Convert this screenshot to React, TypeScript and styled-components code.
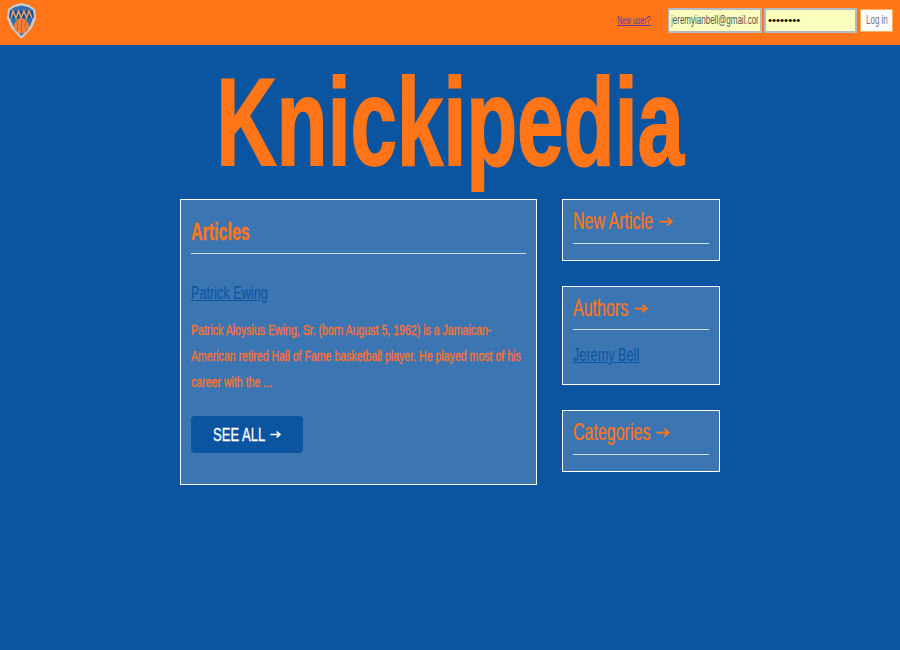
import React from "react";
import styled, { createGlobalStyle } from "styled-components";

const BLUE = "#0a54a0";
const ORANGE = "#ff7517";

const Global = createGlobalStyle`
  html, body { margin: 0; padding: 0; height: 100%; background: ${BLUE}; }
  body { font-family: "Liberation Sans", Arial, sans-serif; }
`;

const Header = styled.header`
  height: 45px;
  background: ${ORANGE};
  display: flex;
  align-items: center;
  padding: 0 7px 0 6px;
`;
const Logo = styled.svg`
  width: 31px;
  height: 37px;
  display: block;
  margin-top: -3px;
`;
const LoginForm = styled.form`
  margin-left: auto;
  margin-bottom: 5px;
  display: flex;
  align-items: center;
`;
const Narrow = styled.span<{ $scale?: number; $width?: number }>`
  display: inline-block;
  white-space: nowrap;
  ${(p) => (p.$width ? `width: ${p.$width}px;` : "")}
  transform-origin: left center;
  transform: scaleX(${(p) => p.$scale ?? 0.667});
`;
const Underlined = styled(Narrow)`
  text-decoration: underline;
`;
const NewUser = styled.a`
  width: 51px;
  font-size: 10.5px;
  color: #5a3aa8;
  margin-top: -1px;
`;
const FieldBox = styled.div`
  width: 93px;
  height: 25px;
  margin-right: 3px;
`;
const Field = styled.input`
  box-sizing: border-box;
  display: block;
  width: 140px;
  height: 25px;
  padding: 0 3px;
  border: 2px solid #b4b8c0;
  background: #faffbd;
  font-family: "Liberation Sans", Arial, sans-serif;
  font-size: 12px;
  color: #555;
  outline: none;
  transform-origin: left center;
  transform: scaleX(0.667);
`;
const PasswordField = styled.input`
  box-sizing: border-box;
  display: block;
  width: 93px;
  height: 25px;
  padding: 0 2px;
  border: 2px solid #b4b8c0;
  background: #faffbd;
  font-family: "Liberation Sans", Arial, sans-serif;
  font-size: 11.5px;
  color: #111;
  outline: none;
`;
const LoginButton = styled.button`
  box-sizing: border-box;
  width: 33px;
  height: 23px;
  padding: 0 0 0 5px;
  text-align: left;
  border: 1px solid #ffb060;
  background: #fff;
  color: #777;
  font-family: "Liberation Sans", Arial, sans-serif;
  font-size: 12px;
`;
const Title = styled.h1`
  margin: 0;
  height: 154px;
  color: ${ORANGE};
  font-size: 124px;
  line-height: 154px;
  font-weight: 700;
  letter-spacing: -0.3px;
  -webkit-text-stroke: 1.8px ${ORANGE};
  text-align: center;
  white-space: nowrap;
  transform: scaleX(0.675);
`;
const Columns = styled.main`
  width: 540px;
  margin: 0 auto;
  display: flex;
  align-items: flex-start;
  gap: 25px;
`;
const Sidebar = styled.aside`
  width: 158px;
  display: flex;
  flex-direction: column;
  gap: 25px;
`;
const Panel = styled.section<{ $height: number }>`
  box-sizing: border-box;
  height: ${(p) => p.$height}px;
  padding: 0 10px;
  border: 1px solid #fff;
  background: rgba(255, 255, 255, 0.2);
`;
const MainPanel = styled(Panel)`
  width: 357px;
  flex: none;
`;
const PanelHeading = styled.h2`
  margin: 0;
  padding-top: 17px;
  height: 36px;
  border-bottom: 1px solid rgba(255, 255, 255, 0.75);
  color: ${ORANGE};
  font-size: 24px;
  line-height: 29px;
  font-weight: 700;
  -webkit-text-stroke: 0.4px ${ORANGE};
`;
const SideHeading = styled.h3<{ $height?: number }>`
  margin: 0;
  padding-top: 6px;
  height: ${(p) => p.$height ?? 37}px;
  border-bottom: 1px solid rgba(255, 255, 255, 0.75);
  color: ${ORANGE};
  font-size: 24px;
  line-height: 29px;
  font-weight: 400;
  -webkit-text-stroke: 0.2px ${ORANGE};
`;
const ArticleLink = styled.a`
  display: block;
  margin-top: 28px;
  color: ${BLUE};
  font-size: 19px;
  line-height: 22px;
`;
const AuthorLink = styled(ArticleLink)`
  margin-top: 14px;
`;
const Summary = styled.p`
  width: 475px;
  margin: 13px 0 0;
  color: #fb7130;
  font-size: 15px;
  line-height: 26px;
  -webkit-text-stroke: 0.35px #fb7130;
  transform-origin: left top;
  transform: scaleX(0.705);
`;
const SeeAll = styled.a`
  display: flex;
  align-items: center;
  justify-content: center;
  width: 112px;
  height: 37px;
  margin-top: 21px;
  border-radius: 4px;
  background: ${BLUE};
  color: #fff;
  font-size: 19px;
  text-decoration: none;
  -webkit-text-stroke: 0.3px #fff;
`;
const ArrowIcon = styled.svg<{ $gap: number; $size: number }>`
  width: ${(p) => p.$size}px;
  height: ${(p) => p.$size * 0.8}px;
  margin-left: ${(p) => p.$gap}px;
  vertical-align: 2px;
`;

const Arrow = ({ gap, size }: { gap: number; size: number }) => (
  <ArrowIcon $gap={gap} $size={size} viewBox="0 0 15 12" aria-hidden="true">
    <path d="M0.5 6 H13 M9 2 L13.6 6 L9 10" stroke="currentColor" strokeWidth="2" fill="none" />
  </ArrowIcon>
);

const HeadingLabel = ({ text, width }: { text: string; width: number }) => (
  <>
    <Narrow $width={width}>{text}</Narrow>
    <Arrow gap={6} size={14} />
  </>
);

const App = () => (
  <>
    <Global />
    <Header>
      <Logo viewBox="0 0 31 37" aria-label="Knicks logo">
        <path d="M2 6 L8 2 L15.5 0 L23 2 L29 6 L30 15 L26 25 L15.5 36 L5 25 L1 15 Z" fill="#c8ccd2" />
        <path d="M4 7 L9 4 L15.5 2.5 L22 4 L27 7 L27.5 14 L24 23 L15.5 33 L7 23 L3.5 14 Z" fill="#2f6fb0" />
        <circle cx="15.5" cy="23" r="7.5" fill="#f0803a" />
        <path d="M15.5 15.5 V30.5 M10 18 Q14 23 10 28 M21 18 Q17 23 21 28" stroke="#a85a2a" strokeWidth="0.7" fill="none" />
        <path d="M4 8 L27 8 L28 15 L3 15 Z" fill="#1d4f8f" />
        <path d="M5 15 L7 8 L10 15 L12.5 8 L15 15 L18 8 L20.5 15 L23 8 L26 15" stroke="#f4a468" strokeWidth="1.4" fill="none" />
      </Logo>
      <LoginForm>
        <NewUser href="#">
          <Underlined>New user?</Underlined>
        </NewUser>
        <FieldBox>
          <Field defaultValue="jeremyianbell@gmail.com" />
        </FieldBox>
        <FieldBox>
          <PasswordField type="password" defaultValue="password" />
        </FieldBox>
        <LoginButton type="button">
          <Narrow>Log in</Narrow>
        </LoginButton>
      </LoginForm>
    </Header>
    <Title>Knickipedia</Title>
    <Columns>
      <MainPanel $height={286}>
        <PanelHeading>
          <Narrow>Articles</Narrow>
        </PanelHeading>
        <ArticleLink href="#">
          <Underlined>Patrick Ewing</Underlined>
        </ArticleLink>
        <Summary>
          Patrick Aloysius Ewing, Sr. (born August 5, 1962) is a Jamaican-American retired Hall of Fame basketball
          player. He played most of his career with the ...
        </Summary>
        <SeeAll href="#">
          <Narrow $scale={0.687} $width={52}>SEE ALL</Narrow>
          <Arrow gap={5} size={11} />
        </SeeAll>
      </MainPanel>
      <Sidebar>
        <Panel $height={62}>
          <SideHeading>
            <HeadingLabel text="New Article" width={80} />
          </SideHeading>
        </Panel>
        <Panel $height={99}>
          <SideHeading $height={36}>
            <HeadingLabel text="Authors" width={55} />
          </SideHeading>
          <AuthorLink href="#">
            <Underlined>Jeremy Bell</Underlined>
          </AuthorLink>
        </Panel>
        <Panel $height={62}>
          <SideHeading>
            <HeadingLabel text="Categories" width={77} />
          </SideHeading>
        </Panel>
      </Sidebar>
    </Columns>
  </>
);

export default App;
